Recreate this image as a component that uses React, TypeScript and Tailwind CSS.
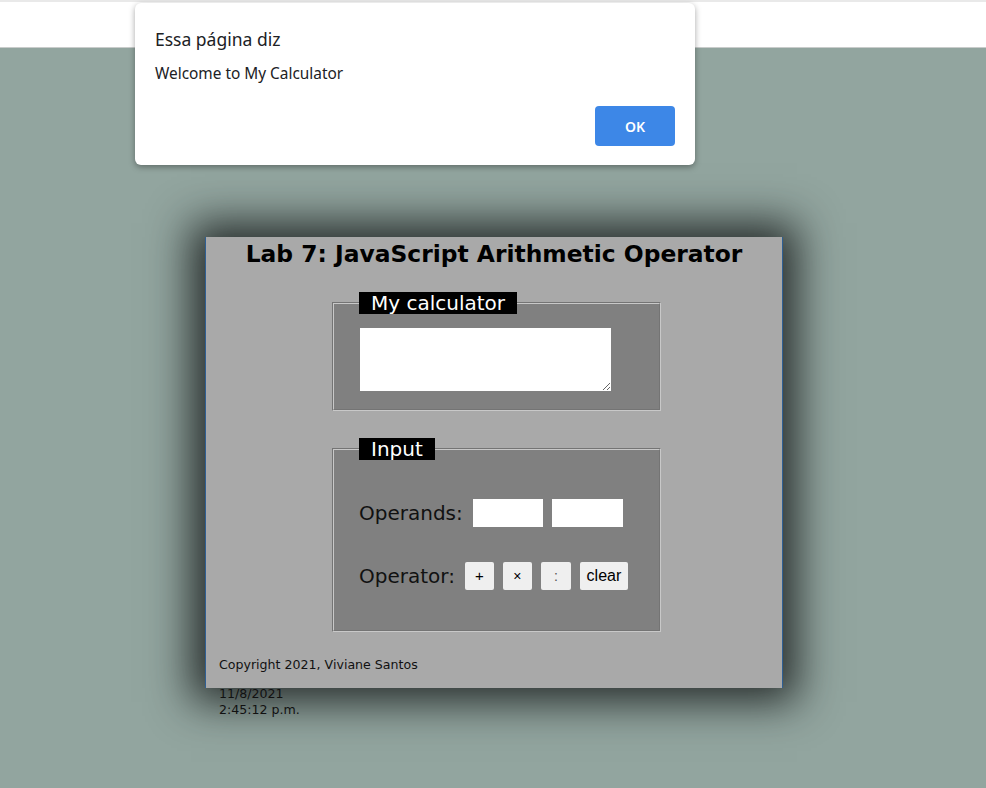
import React from "react";

export default function App() {
  return (
    <div className="relative min-h-[788px] w-full bg-[#92a59f] overflow-hidden" style={{ fontFamily: '"DejaVu Sans", Verdana, sans-serif' }}>
      {/* top white strip */}
      <div className="h-[48px] bg-white border-t-2 border-t-[#e9e9e9] border-b border-b-[#c9cccb]" />

      {/* main panel */}
      <div className="pl-[2px]">
        <div className="mx-auto mt-[189px] w-[578px] h-[451px] pt-[3px] bg-[#a9a9a9] border-x border-x-[#2f5f93] shadow-[0_0_40px_14px_rgba(20,24,23,0.85)]">
          <h1 className="text-center text-[23.4px] leading-[28px] font-bold text-black">
            Lab 7: JavaScript Arithmetic Operator
          </h1>

          <fieldset className="ml-[126px] mt-[24px] w-[329px] bg-[#808080] border-2 [border-style:groove] border-[#c8c8c8] pl-[25px] pb-[18px]">
            <legend className="bg-black text-white text-[20px] leading-[22px] px-[12px]">My calculator</legend>
            <textarea className="mt-[14px] ml-px block w-[251px] h-[63px] bg-white border-0 outline-none" />
          </fieldset>

          <fieldset className="ml-[126px] mt-[27px] w-[329px] bg-[#808080] border-2 [border-style:groove] border-[#c8c8c8] pl-[25px] pb-[40px]">
            <legend className="bg-black text-white text-[20px] leading-[22px] px-[12px]">Input</legend>
            <div className="mt-[39px] flex items-center h-[28px]">
              <span className="text-[20px] leading-[24px] text-[#111]">Operands:</span>
              <input className="ml-[10px] w-[70px] h-[28px] bg-white border-0 outline-none" />
              <input className="ml-[9px] w-[71px] h-[28px] bg-white border-0 outline-none" />
            </div>
            <div className="mt-[35px] flex items-center h-[28px]">
              <span className="text-[20px] leading-[24px] text-[#111]">Operator:</span>
              <div className="ml-[10px] flex gap-[9px]" style={{ fontFamily: '"Liberation Sans", Arial, sans-serif' }}>
                <button className="w-[29px] h-[28px] bg-[#efefef] rounded-[2px] text-[15px] text-black">+</button>
                <button className="w-[29px] h-[28px] bg-[#efefef] rounded-[2px] text-[14px] text-black">×</button>
                <button className="w-[30px] h-[28px] bg-[#efefef] rounded-[2px] text-[14px] text-[#555]">:</button>
                <button className="w-[48px] h-[28px] bg-[#efefef] rounded-[2px] text-[16px] text-black">clear</button>
              </div>
            </div>
          </fieldset>

          <div className="mt-[25px] pl-[13px] text-[12.6px] leading-[16px] text-[#111]">
            <p className="mb-[13px]">Copyright 2021, Viviane Santos</p>
            <p>11/8/2021</p>
            <p>2:45:12 p.m.</p>
          </div>
        </div>
      </div>

      {/* alert dialog */}
      <div className="absolute left-[135px] top-[3px] w-[560px] h-[162px] bg-white rounded-[6px] shadow-[0_2px_6px_rgba(0,0,0,0.35)] px-[20px] pt-[24px]" style={{ fontFamily: '"Noto Sans", "Open Sans", sans-serif' }}>
        <div className="text-[17.5px] leading-[24px] text-[#202124]">Essa página diz</div>
        <div className="mt-[13px] text-[15.4px] leading-[20px] text-[#202124]">Welcome to My Calculator</div>
        <div className="mt-[22px] flex justify-end">
          <button className="w-[80px] h-[40px] rounded-[4px] bg-[#3d87e7] text-white text-[14px] font-semibold">OK</button>
        </div>
      </div>
    </div>
  );
}
